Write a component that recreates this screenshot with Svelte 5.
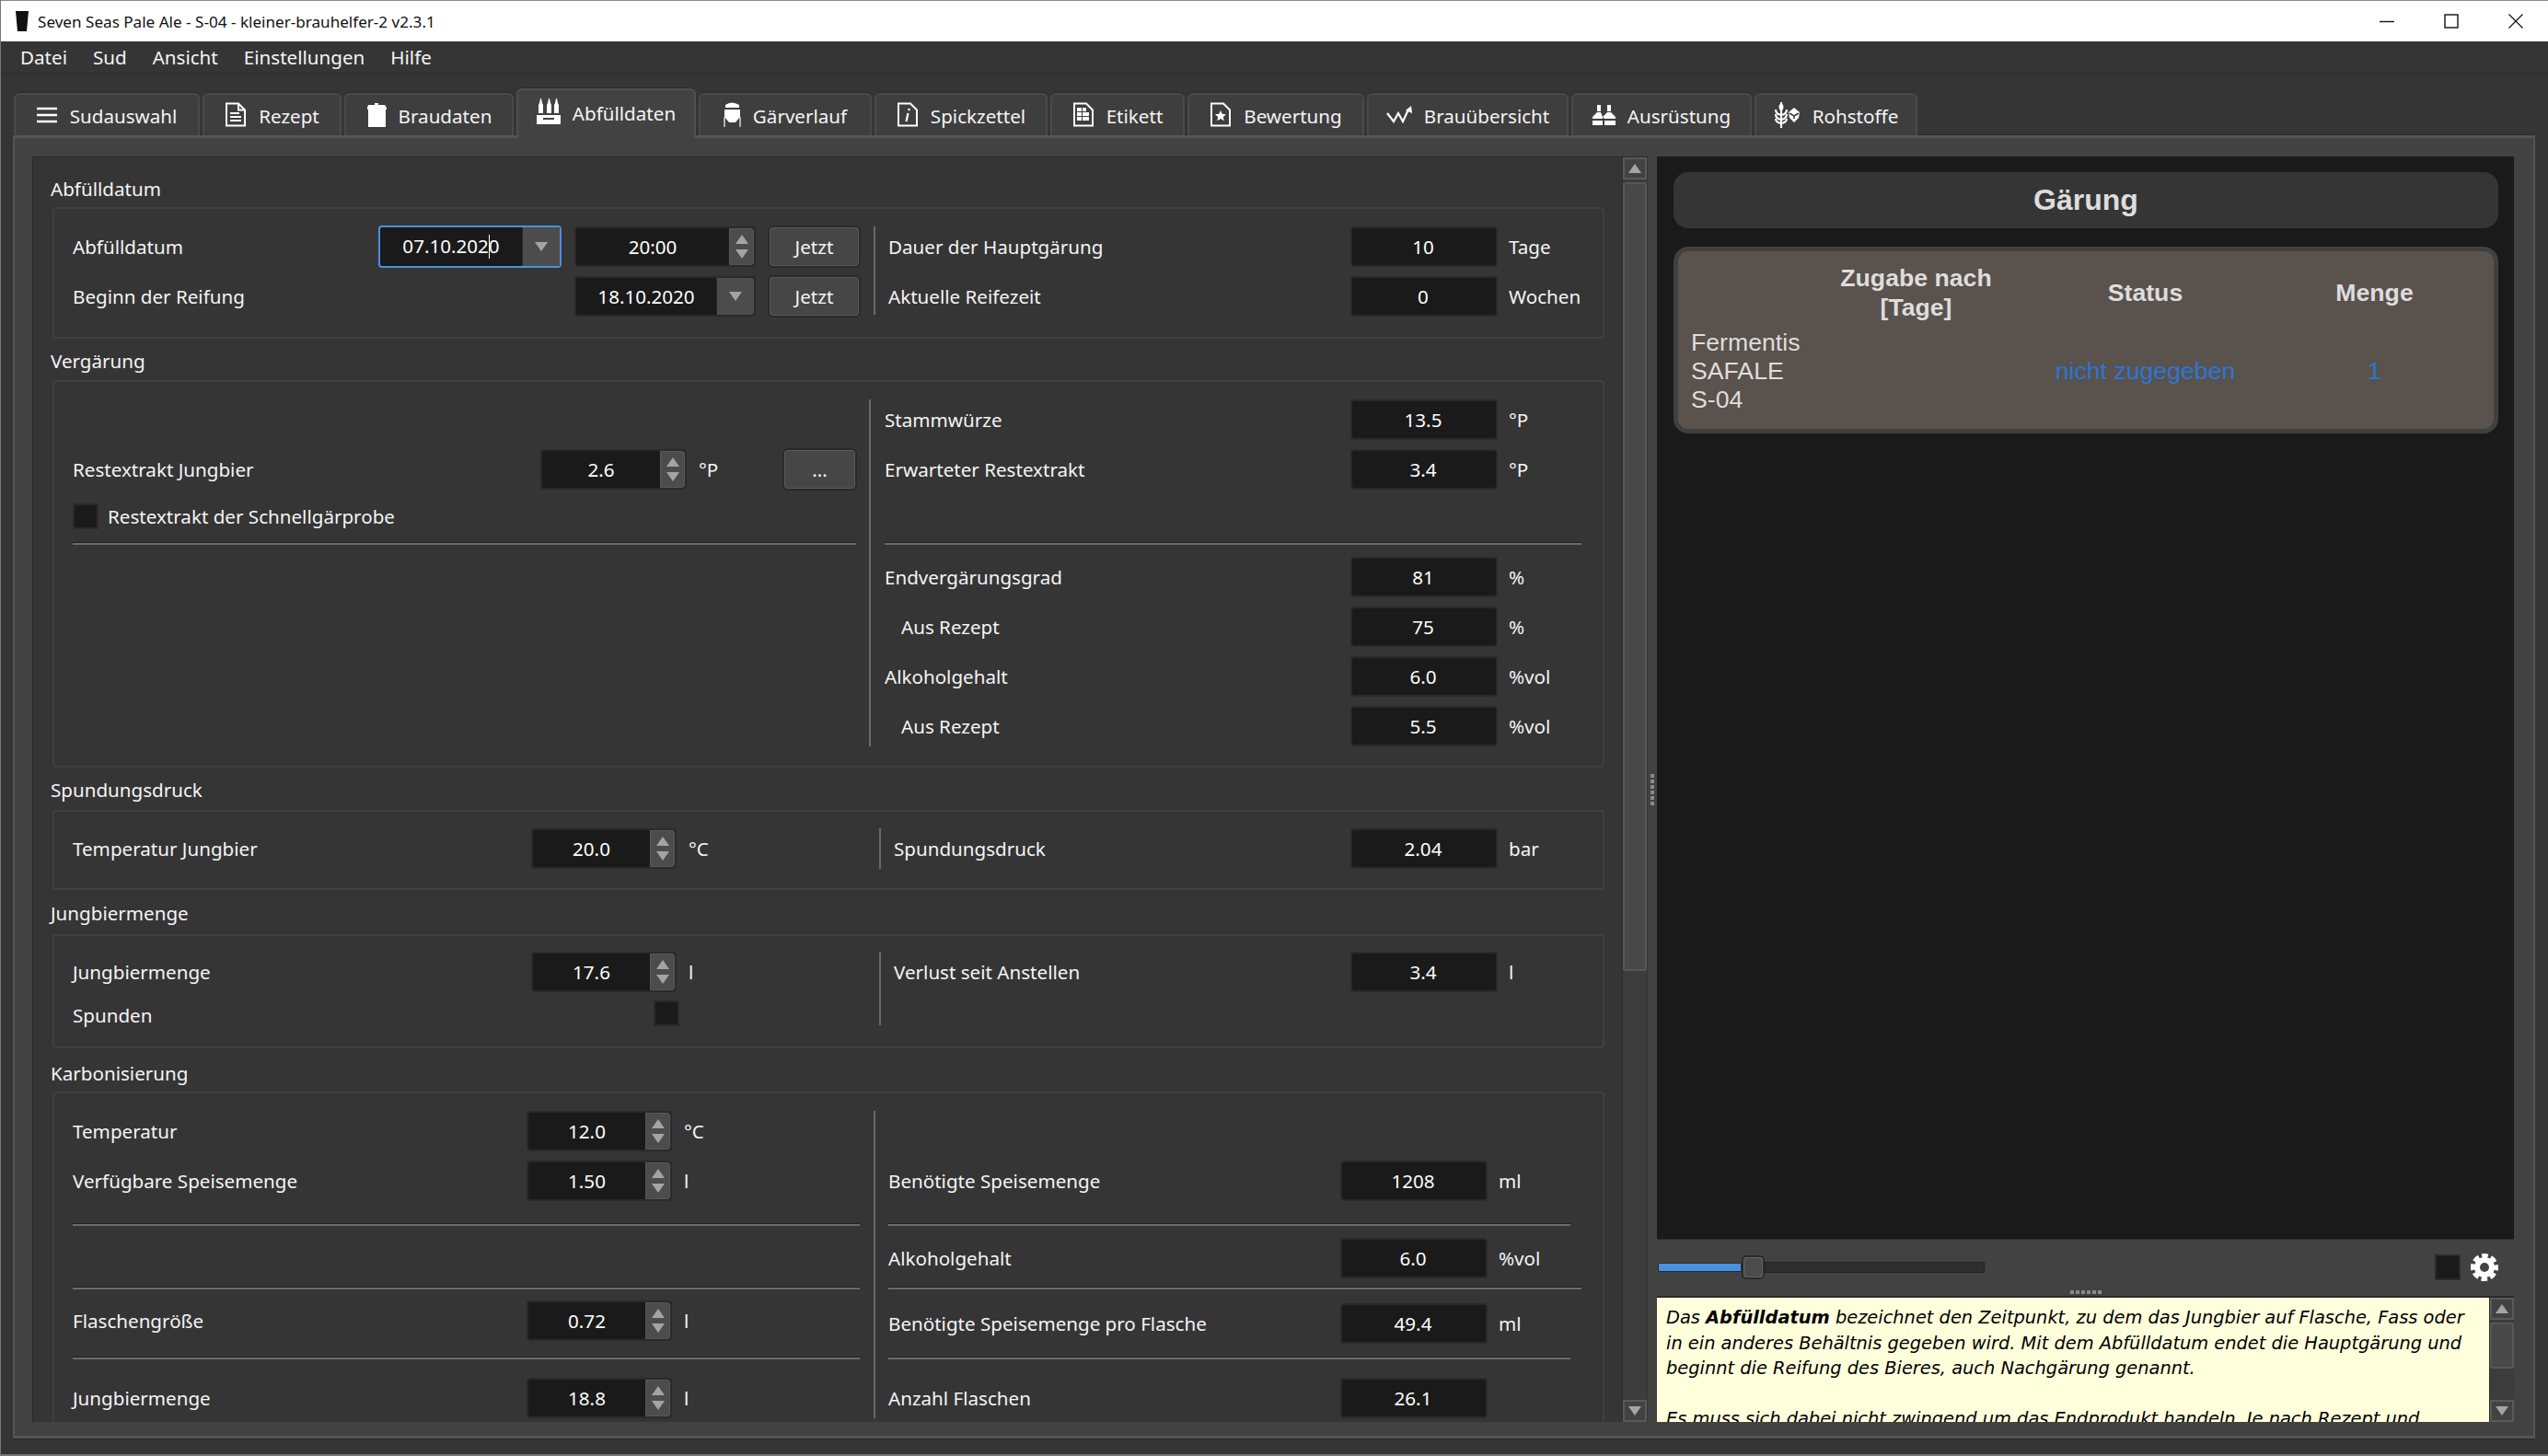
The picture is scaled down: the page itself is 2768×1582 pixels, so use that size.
<script>
  // tab widths measured from the window, gap between them is constant
  const tabs = [
    { id: 'menu', label: 'Sudauswahl', w: 202 },
    { id: 'recipe', label: 'Rezept', w: 151 },
    { id: 'pot', label: 'Braudaten', w: 184 },
    { id: 'bottles', label: 'Abfülldaten', w: 195, active: true },
    { id: 'tank', label: 'Gärverlauf', w: 188 },
    { id: 'note', label: 'Spickzettel', w: 188 },
    { id: 'label', label: 'Etikett', w: 146 },
    { id: 'star', label: 'Bewertung', w: 192 },
    { id: 'chart', label: 'Brauübersicht', w: 219 },
    { id: 'gear', label: 'Ausrüstung', w: 196 },
    { id: 'hops', label: 'Rohstoffe', w: 177 }
  ];
  const menu = ['Datei', 'Sud', 'Ansicht', 'Einstellungen', 'Hilfe'];
</script>

{#snippet spin(value)}
  <div class="edit spin">
    <span class="val">{value}</span>
    <span class="arrows"><i class="tri up"></i><i class="tri down"></i></span>
  </div>
{/snippet}

{#snippet combo(value, focused = false)}
  <div class="edit combo" class:focused>
    <span class="val">
      {#if focused}07.10.202<span class="caret"></span>0{:else}{value}{/if}
    </span>
    <span class="drop"><i class="tri down"></i></span>
  </div>
{/snippet}

{#snippet out(label, value, unit = '', indent = false)}
  <div class="lbl" class:indent>{label}</div>
  <div class="edit out">{value}</div>
  <span class="unit">{unit}</span>
{/snippet}

{#snippet scrollbar(cls)}
  <div class="sbar {cls}">
    <div class="sbtn"><i class="tri up"></i></div>
    <div class="groove"><div class="thumb"></div></div>
    <div class="sbtn"><i class="tri down"></i></div>
  </div>
{/snippet}

{#snippet icon(id)}
  {#if id === 'menu'}
    <svg width="23" height="18" viewBox="0 0 23 18"><path d="M0 2h22M0 9h22M0 16h22" stroke="#fff" stroke-width="2.4"/></svg>
  {:else if id === 'recipe'}
    <svg width="24" height="27" viewBox="0 0 24 27" fill="none" stroke="#fff" stroke-width="2"><path d="M2 1.5h13l7 7V25.500H2z"/><path d="M15 1.500v7h7M6 12h10M6 16h12M6 20h12"/></svg>
  {:else if id === 'pot'}
    <svg width="22" height="26" viewBox="0 0 22 26" fill="#fff"><path d="M9 0h4v2h7l2 3v2h-1v19H2V7H1V5l1-3h7z"/></svg>
  {:else if id === 'bottles'}
    <svg width="26" height="28" viewBox="0 0 26 28" fill="#fff"><path d="M3 5l1-5h1l1 5 1 2v9H2V7zM12 5l1-5h1l1 5 1 2v9h-5V7zM20 5l1-5h1l1 5 1 2v9h-5V7z"/><path fill-rule="evenodd" d="M0 18h26v10H0zM7 21v2h12v-2z"/></svg>
  {:else if id === 'tank'}
    <svg width="19" height="27" viewBox="0 0 19 27" fill="#fff"><path d="M2 3q7-5 15 0v3H2zM1 8h17v8l-5 6H6l-5-6z"/><path d="M1 16v11M18 16v11" stroke="#fff" stroke-width="1.200"/></svg>
  {:else if id === 'note'}
    <svg width="24" height="27" viewBox="0 0 24 27" fill="none" stroke="#fff" stroke-width="2"><path d="M2 1.500h13l7 7V25.500H2z"/><path d="M12.500 12l-2 9" stroke-width="2.200"/><circle cx="13.500" cy="8" r="1.300" fill="#fff" stroke="none"/></svg>
  {:else if id === 'label'}
    <svg width="24" height="27" viewBox="0 0 24 27" fill="none" stroke="#fff" stroke-width="2"><path d="M2 1.500h13l7 7V25.500H2z"/><path fill="#fff" stroke="none" d="M5 6h5v4H5zM11 6h4v4h-4zM5 11h5v4H5zM11 11h7v4h-7zM5 16h5v4H5zM11 16h7v4h-7z"/></svg>
  {:else if id === 'star'}
    <svg width="24" height="27" viewBox="0 0 24 27" fill="none" stroke="#fff" stroke-width="2"><path d="M2 1.500h13l7 7V25.500H2z"/><path fill="#fff" stroke="none" d="M12 9l1.800 3.800 4.200.5-3.100 2.800.8 4.100-3.700-2.100-3.700 2.100.8-4.100-3.100-2.800 4.200-.5z"/></svg>
  {:else if id === 'chart'}
    <svg width="28" height="19" viewBox="0 0 28 19" fill="none" stroke="#fff" stroke-width="2.200"><path d="M1 8l7 9 5-9 5 9 6-13"/><path fill="#fff" stroke="none" d="M27 0l1 8-7-3z"/></svg>
  {:else if id === 'gear'}
    <svg width="25" height="22" viewBox="0 0 25 22" fill="#fff"><path d="M5 0h4v7H5zM16 0h4v7h-4zM5 8h4l2 5v2H0v-2zM16 8h4l5 5v2H13l-2-2zM0 17h11v5H0zM13 17h12v5H13z"/></svg>
  {:else}
    <svg width="29" height="28" viewBox="0 0 29 28" fill="none" stroke="#fff" stroke-width="2.100"><path d="M8 0v28M8 2q-3 3 0 7q3-4 0-7z"/><path d="M2 8q0 5 6 6q6-1 6-6M2 13q0 5 6 6q6-1 6-6M2 18q0 4 6 5q6-1 6-5"/><path fill="#fff" stroke="none" d="M22 6l6 5-1 6-5 5-5-5-1-6z"/><path d="M17 12l5 3 5-3M22 15v3" stroke="#3e3e3e" stroke-width="1.600"/></svg>
  {/if}
{/snippet}

<div class="window">
  <header class="titlebar">
    <svg class="app-icon" width="16" height="24" viewBox="0 0 16 24"><path d="M1 1h14l-2 22H3z" fill="#111"/></svg>
    <span class="title">Seven Seas Pale Ale - S-04 - kleiner-brauhelfer-2 v2.3.1</span>
    <div class="wincontrols">
      <svg width="16" height="16" viewBox="0 0 16 16"><path d="M0 8.500h16" stroke="#111" stroke-width="1.400"/></svg>
      <svg width="16" height="16" viewBox="0 0 16 16"><rect x="1" y="1" width="14" height="14" fill="none" stroke="#111" stroke-width="1.400"/></svg>
      <svg width="16" height="16" viewBox="0 0 16 16"><path d="M0.500 0.500l15 15M15.500 0.500l-15 15" stroke="#111" stroke-width="1.200"/></svg>
    </div>
  </header>

  <nav class="menubar">
    {#each menu as item}<span>{item}</span>{/each}
  </nav>

  <div class="tabbar">
    {#each tabs as tab}
      <div class="tab" class:active={tab.active} style:width="{tab.w}px">
        {@render icon(tab.id)}
        <span>{tab.label}</span>
      </div>
    {/each}
  </div>

  <main class="pane">
    <section class="scrollarea">
      <div class="content">
        <div class="caption">Abfülldatum</div>
        <div class="group g1 mt5">
          <div class="col left">
            <div class="row">
              <div class="lbl">Abfülldatum</div>
              {@render combo('07.10.2020', true)}
              <div class="edit spin time"><span class="val">20:00</span><span class="arrows"><i class="tri up"></i><i class="tri down"></i></span></div>
              <button class="btn">Jetzt</button>
            </div>
            <div class="row">
              <div class="lbl">Beginn der Reifung</div>
              <div class="edit combo date2"><span class="val">18.10.2020</span><span class="drop"><i class="tri down"></i></span></div>
              <button class="btn">Jetzt</button>
            </div>
          </div>
          <div class="vline"></div>
          <div class="col right">
            <div class="row">{@render out('Dauer der Hauptgärung', '10', 'Tage')}</div>
            <div class="row">{@render out('Aktuelle Reifezeit', '0', 'Wochen')}</div>
          </div>
        </div>

        <div class="caption mt9">Vergärung</div>
        <div class="group g2 mt6">
          <div class="col left">
            <div class="row mt54">
              <div class="lbl">Restextrakt Jungbier</div>
              {@render spin('2.6')}
              <span class="unit">°P</span>
              <button class="btn dots">...</button>
            </div>
            <div class="row check-row">
              <span class="check"></span>
              <span class="check-label">Restextrakt der Schnellgärprobe</span>
            </div>
            <div class="hline mt9"></div>
          </div>
          <div class="vline"></div>
          <div class="col right">
            <div class="row">{@render out('Stammwürze', '13.5', '°P')}</div>
            <div class="row">{@render out('Erwarteter Restextrakt', '3.4', '°P')}</div>
            <div class="hline mt57"></div>
            <div class="row mt13">{@render out('Endvergärungsgrad', '81', '%')}</div>
            <div class="row">{@render out('Aus Rezept', '75', '%', true)}</div>
            <div class="row">{@render out('Alkoholgehalt', '6.0', '%vol')}</div>
            <div class="row">{@render out('Aus Rezept', '5.5', '%vol', true)}</div>
          </div>
        </div>

        <div class="caption mt9">Spundungsdruck</div>
        <div class="group g3 mt7">
          <div class="col left">
            <div class="row">
              <div class="lbl">Temperatur Jungbier</div>
              {@render spin('20.0')}
              <span class="unit">°C</span>
            </div>
          </div>
          <div class="vline"></div>
          <div class="col right">
            <div class="row">{@render out('Spundungsdruck', '2.04', 'bar')}</div>
          </div>
        </div>

        <div class="caption mt10">Jungbiermenge</div>
        <div class="group g4 mt8">
          <div class="col left">
            <div class="row">
              <div class="lbl">Jungbiermenge</div>
              {@render spin('17.6')}
              <span class="unit">l</span>
            </div>
            <div class="row spunden">
              <div class="lbl wide">Spunden</div>
              <span class="check"></span>
            </div>
          </div>
          <div class="vline"></div>
          <div class="col right">
            <div class="row">{@render out('Verlust seit Anstellen', '3.4', 'l')}</div>
          </div>
        </div>

        <div class="caption mt12">Karbonisierung</div>
        <div class="group g5 mt5">
          <div class="col left">
            <div class="row">
              <div class="lbl">Temperatur</div>
              {@render spin('12.0')}
              <span class="unit">°C</span>
            </div>
            <div class="row">
              <div class="lbl">Verfügbare Speisemenge</div>
              {@render spin('1.50')}
              <span class="unit">l</span>
            </div>
            <div class="hline mt24"></div>
            <div class="hline mt66"></div>
            <div class="row mt12">
              <div class="lbl">Flaschengröße</div>
              {@render spin('0.72')}
              <span class="unit">l</span>
            </div>
            <div class="hline mt17"></div>
            <div class="row mt20">
              <div class="lbl">Jungbiermenge</div>
              {@render spin('18.8')}
              <span class="unit">l</span>
            </div>
          </div>
          <div class="vline"></div>
          <div class="col right">
            <div class="row mt54">{@render out('Benötigte Speisemenge', '1208', 'ml')}</div>
            <div class="hline short mt24"></div>
            <div class="row mt13">{@render out('Alkoholgehalt', '6.0', '%vol')}</div>
            <div class="hline mt9"></div>
            <div class="row mt15">{@render out('Benötigte Speisemenge pro Flasche', '49.4', 'ml')}</div>
            <div class="hline short mt14"></div>
            <div class="row mt20">{@render out('Anzahl Flaschen', '26.1', '')}</div>
          </div>
        </div>
      </div>
      {@render scrollbar('main-bar')}
    </section>

    <div class="splitter"><span class="grip"></span></div>

    <aside class="side">
      <div class="web">
        <h1 class="web-title">Gärung</h1>
        <div class="web-card">
          <table>
            <thead>
              <tr><th></th><th>Zugabe nach<br />[Tage]</th><th>Status</th><th>Menge</th></tr>
            </thead>
            <tbody>
              <tr>
                <td class="name">Fermentis<br />SAFALE<br />S-04</td>
                <td></td>
                <td class="link">nicht zugegeben</td>
                <td class="link">1</td>
              </tr>
            </tbody>
          </table>
        </div>
      </div>

      <div class="controls">
        <div class="slider"><span class="fill"></span><span class="handle"></span><span class="rest"></span></div>
        <span class="check"></span>
        <svg class="cog" width="30" height="30" viewBox="0 0 30 30" fill="none" stroke="#fff">
          <circle cx="15" cy="15" r="8" stroke-width="6" />
          <circle cx="15" cy="15" r="12.500" stroke-width="5" stroke-dasharray="6.500 3.320" stroke-dashoffset="3.200" />
        </svg>
      </div>

      <div class="hsplit"><span class="grip-h"></span></div>

      <div class="help">
        <div class="help-text">
          Das <b>Abfülldatum</b> bezeichnet den Zeitpunkt, zu dem das Jungbier auf Flasche, Fass oder<br />
          in ein anderes Behältnis gegeben wird. Mit dem Abfülldatum endet die Hauptgärung und<br />
          beginnt die Reifung des Bieres, auch Nachgärung genannt.<br />
          <br />
          Es muss sich dabei nicht zwingend um das Endprodukt handeln. Je nach Rezept und
        </div>
        {@render scrollbar('help-bar')}
      </div>
    </aside>
  </main>
</div>

<style>
  :global(body) {
    margin: 0;
    background: #353535;
  }
  .window {
    width: 2768px;
    height: 1582px;
    box-sizing: border-box;
    display: flex;
    flex-direction: column;
    overflow: hidden;
    background: #353535;
    color: #f4f4f4;
    font-family: "Noto Sans", sans-serif;
    font-size: 20.6px;
    border-left: 1px solid #777;
    border-bottom: 2px solid #777;
  }

  .titlebar {
    flex: none;
    height: 45px;
    box-sizing: border-box;
    display: flex;
    align-items: center;
    background: #fff;
    border-top: 1px solid #8a8a80;
    color: #111;
    padding-left: 15px;
    font-size: 17.1px;
  }
  .app-icon { margin-right: 9px; }
  .wincontrols {
    margin-left: auto;
    display: flex;
    gap: 54px;
    padding-right: 27px;
  }

  .menubar {
    flex: none;
    height: 36px;
    box-sizing: border-box;
    display: flex;
    align-items: center;
    gap: 28px;
    padding-left: 21px;
    border-bottom: 2px solid #2f2f2f;
  }

  .tabbar {
    flex: none;
    height: 66px;
    display: flex;
    align-items: flex-end;
    gap: 3px;
    padding-left: 14px;
    position: relative;
    z-index: 1;
  }
  .tab {
    height: 46px;
    box-sizing: border-box;
    display: flex;
    align-items: center;
    justify-content: center;
    gap: 13px;
    background: #3e3e3e;
    border: 2px solid #4a4a4a;
    border-bottom: none;
    border-radius: 6px 6px 0 0;
    box-shadow: 0 -1px 0 #2b2b2b;
    padding-top: 2px;
  }
  .tab svg { margin-top: -3px; }
  .tab.active {
    height: 54px;
    margin-bottom: -3px;
    background: #424242;
    border-color: #505050;
    padding-bottom: 5px;
  }

  .pane {
    flex: 1;
    min-height: 0;
    margin: 0 14px 17px 13px;
    box-sizing: border-box;
    display: flex;
    background: #424242;
    border-top: 3px solid #555;
    border-left: 2px solid #555;
    border-bottom: 3px solid #555;
    border-right: 2px solid #555;
    box-shadow: 0 -1px 0 #2a2a2a, 0 1px 0 #2a2a2a;
    padding: 20px 20px 15px 19px;
  }

  .scrollarea {
    flex: none;
    width: 1755px;
    display: flex;
    background: #353535;
    border-top: 1px solid #2a2a2a;
    border-left: 1px solid #2a2a2a;
    box-sizing: border-box;
    overflow: hidden;
  }
  .content {
    flex: none;
    width: 1726px;
    box-sizing: border-box;
    padding: 19px 0 0 19px;
    height: 100%;
    overflow: hidden;
  }
  .caption {
    height: 30px;
    line-height: 30px;
  }

  .mt5 { margin-top: 5px; }
  .mt6 { margin-top: 6px; }
  .mt7 { margin-top: 7px; }
  .mt8 { margin-top: 8px; }
  .mt9 { margin-top: 9px; }
  .mt10 { margin-top: 10px; }
  .mt12 { margin-top: 12px; }
  .mt13 { margin-top: 13px; }
  .mt14 { margin-top: 14px; }
  .mt15 { margin-top: 15px; }
  .mt17 { margin-top: 17px; }
  .mt20 { margin-top: 20px; }
  .mt24 { margin-top: 24px; }
  .mt54 { margin-top: 54px; }
  .mt57 { margin-top: 57px; }
  .mt66 { margin-top: 66px; }

  .group {
    width: 1686px;
    margin-left: 2px;
    box-sizing: border-box;
    display: flex;
    align-items: flex-start;
    border: 2px solid #404040;
    border-radius: 4px;
    padding-left: 20px;
  }
  .g1 { height: 143px; padding-top: 19px; --left: 855px; --vgap: 15px; --rgap: 14px; --lbl-r: 502px; --lbl-l: 332px; --vh: 96px; }
  .g2 { height: 421px; padding-top: 19px; --left: 851px; --vgap: 14px; --rgap: 15px; --lbl-r: 506px; --lbl-l: 508px; --vh: 377px; }
  .g3 { height: 87px; padding-top: 18px; --left: 862px; --vgap: 14px; --rgap: 14px; --lbl-r: 496px; --lbl-l: 498px; --vh: 44px; }
  .g4 { height: 124px; padding-top: 17px; --left: 862px; --vgap: 14px; --rgap: 14px; --lbl-r: 496px; --lbl-l: 498px; --vh: 80px; }
  .g5 { height: 420px; padding-top: 19px; --left: 855px; --vgap: 15px; --rgap: 14px; --lbl-r: 491px; --lbl-l: 493px; --vh: 334px; }

  .col.left { flex: none; width: var(--left); }
  .col.right { flex: 1; margin-left: var(--rgap); min-width: 0; padding-right: 23px; }
  .vline {
    flex: none;
    width: 2px;
    height: var(--vh);
    margin-left: var(--vgap);
    background: #6a6a6a;
  }
  .row {
    height: 44px;
    display: flex;
    align-items: center;
  }
  .row + .row { margin-top: 10px; }
  .row.mt13 { margin-top: 13px; }
  .row.mt15 { margin-top: 15px; }
  .row.mt12 { margin-top: 12px; }
  .row.mt20 { margin-top: 20px; }
  .row.spunden { margin-top: 3px; }
  .g4 .row.spunden .wide { width: 631px; }
  .spunden .check { margin-top: -5px; }
  .check-row { height: 38px; }
  .lbl {
    flex: none;
    box-sizing: border-box;
    white-space: nowrap;
  }
  .left .lbl { width: var(--lbl-l); }
  .right .lbl { width: var(--lbl-r); }
  .lbl.indent { padding-left: 18px; }
  .unit {
    margin-left: 12px;
    white-space: nowrap;
  }
  .left .unit { margin-left: 13px; }
  .hline {
    height: 3px;
    box-sizing: border-box;
    border-top: 1px solid #222;
    background: #6c6c6c;
  }
  .hline.short { margin-right: 12px; }

  .edit {
    flex: none;
    height: 44px;
    box-sizing: border-box;
    display: flex;
    background: #1a1a1a;
    border: 2px solid #2a2a2a;
    border-radius: 4px;
    color: #fff;
    text-align: center;
    line-height: 41px;
  }
  .out {
    width: 160px;
    justify-content: center;
    padding-right: 2px;
  }
  .val {
    flex: 1;
    text-align: center;
    white-space: nowrap;
  }
  .spin { width: 158px; }
  .g2 .spin { width: 159px; }
  .spin.time { width: 197px; margin-left: 14px; }
  .arrows {
    flex: none;
    width: 27px;
    display: flex;
    flex-direction: column;
    align-items: center;
    justify-content: center;
    gap: 6px;
    background: #4c4c4c;
    border-radius: 0 3px 3px 0;
    border: 1px solid #585858;
    box-sizing: border-box;
  }
  .combo { width: 199px; }
  .combo.date2 { width: 197px; margin-left: 213px; }
  .combo.focused {
    border-color: #4a90e2;
    margin-top: -1px;
    height: 46px;
  }
  .drop {
    flex: none;
    width: 40px;
    display: flex;
    align-items: center;
    justify-content: center;
    background: #4c4c4c;
    border-radius: 0 3px 3px 0;
    border-left: 1px solid #2a2a2a;
  }
  .caret {
    display: inline-block;
    width: 1px;
    height: 26px;
    margin: 0 -1px 0 0;
    background: #fff;
    vertical-align: -6px;
  }
  .tri {
    display: block;
    width: 0;
    height: 0;
    border-left: 7px solid transparent;
    border-right: 7px solid transparent;
  }
  .tri.up { border-bottom: 10px solid #a4a4a4; }
  .tri.down { border-top: 10px solid #a4a4a4; }

  .btn {
    flex: none;
    width: 99px;
    height: 44px;
    margin-left: 14px;
    box-sizing: border-box;
    background: #464646;
    border: 2px solid #5a5a5a;
    outline: 2px solid #2a2a2a;
    outline-offset: -1px;
    border-radius: 5px;
    color: #f4f4f4;
    font: inherit;
    padding: 0;
  }
  .btn.dots { width: 79px; margin-left: auto; }
  .check {
    flex: none;
    width: 28px;
    height: 28px;
    box-sizing: border-box;
    background: #1a1a1a;
    border: 2px solid #2a2a2a;
  }
  .check-label { margin-left: 10px; }

  .sbar {
    flex: none;
    width: 27px;
    height: 100%;
    display: flex;
    flex-direction: column;
    background: #3c3c3c;
    box-sizing: border-box;
    border-left: 1px solid #2f2f2f;
  }
  .sbtn {
    flex: none;
    height: 24px;
    display: flex;
    align-items: center;
    justify-content: center;
    background: #424242;
    border: 2px solid #5a5a5a;
    box-sizing: border-box;
  }
  .groove {
    flex: 1;
    margin: 3px 0;
    min-height: 0;
  }
  .thumb {
    background: #484848;
    border: 2px solid #575757;
    border-radius: 2px;
    box-sizing: border-box;
  }
  .main-bar .thumb { height: 857px; }
  .help-bar .thumb { height: 50px; }

  .splitter {
    flex: none;
    width: 10px;
    display: flex;
    align-items: center;
    justify-content: center;
  }
  .grip {
    width: 4px;
    height: 34px;
    background: repeating-linear-gradient(#8a8a8a 0 4px, #424242 4px 6px);
  }

  .side {
    flex: none;
    width: 931px;
    display: flex;
    flex-direction: column;
  }
  .web {
    flex: none;
    height: 1177px;
    box-sizing: border-box;
    padding: 17px 17px 0 18px;
    background: #1a1a1a;
    font-family: "Liberation Sans", Arial, sans-serif;
    font-size: 26.67px;
    color: #ddd;
    border-bottom: 1px solid #2a2a2a;
  }
  .web-title {
    margin: 0;
    height: 61px;
    line-height: 60px;
    border-radius: 16px;
    background: #353535;
    text-align: center;
    font-size: 32px;
    font-weight: bold;
    color: #ddd;
  }
  .web-card {
    margin-top: 20px;
    height: 203px;
    box-sizing: border-box;
    background: #5a524c;
    border: 5px solid #404040;
    border-radius: 16px;
  }
  table {
    border-collapse: collapse;
    table-layout: fixed;
    width: 881px;
  }
  th:first-child { width: 134px; }
  th { height: 84px; padding: 0; width: 249px; line-height: 32px; vertical-align: middle; padding-top: 6px; box-sizing: border-box; }
  td { padding: 0; text-align: center; line-height: 31px; height: 93px; }
  td.name { text-align: left; padding-left: 14px; white-space: nowrap; }
  td.link { color: #2a76d6; }

  .controls {
    flex: none;
    height: 53px;
    box-sizing: border-box;
    padding-top: 6px;
    display: flex;
    align-items: center;
  }
  .slider {
    flex: none;
    width: 355px;
    margin-left: 1px;
    margin-right: auto;
    display: flex;
    align-items: center;
  }
  .fill {
    width: 91px;
    height: 10px;
    background: #4a90e2;
    border: 1px solid #2a2a2a;
    border-radius: 2px 0 0 2px;
    box-sizing: border-box;
  }
  .handle {
    flex: none;
    width: 25px;
    height: 26px;
    box-sizing: border-box;
    background: #4c4c4c;
    border: 2px solid #2a2a2a;
    outline: 1px solid #666;
    outline-offset: -3px;
    border-radius: 5px;
  }
  .rest {
    flex: 1;
    height: 10px;
    background: #2e2e2e;
    border: 1px solid #242424;
  }
  .cog { margin: 0 17px 0 11px; }

  .hsplit {
    flex: none;
    height: 8px;
    display: flex;
    align-items: center;
    justify-content: center;
  }
  .grip-h {
    width: 34px;
    height: 4px;
    background: repeating-linear-gradient(90deg, #8a8a8a 0 4px, #424242 4px 6px);
  }
  .help {
    flex: 1;
    min-height: 0;
    display: flex;
    background: #ffffdc;
    border-top: 2px solid #2a2a2a;
    overflow: hidden;
  }
  .help-text {
    flex: 1;
    min-width: 0;
    overflow: hidden;
    padding: 8px 0 0 10px;
    color: #000;
    font-family: "DejaVu Sans", sans-serif;
    font-style: italic;
    font-size: 19.4px;
    line-height: 27.500px;
    white-space: nowrap;
  }
</style>
